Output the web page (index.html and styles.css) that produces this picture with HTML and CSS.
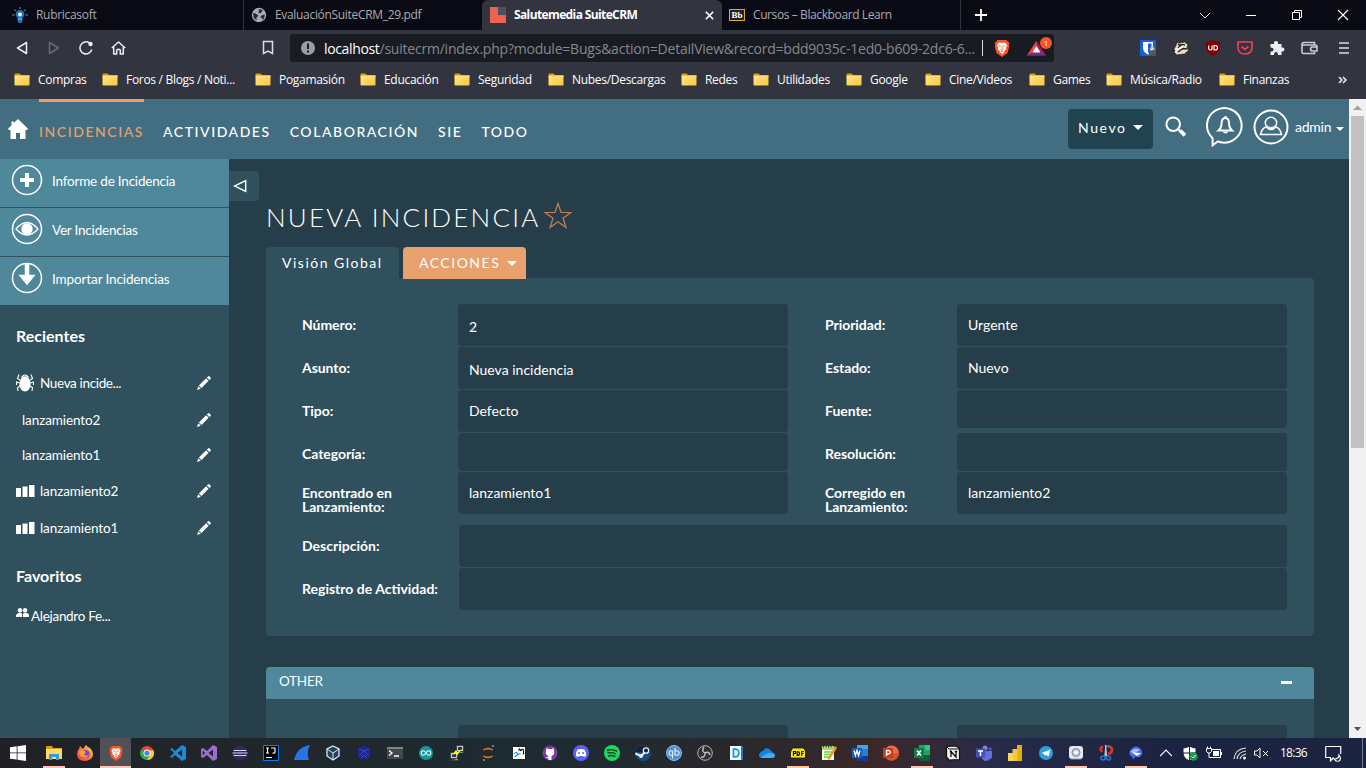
FILE: index.html
```html
<!DOCTYPE html>
<html lang="es">
<head>
<meta charset="utf-8">
<title>Salutemedia SuiteCRM</title>
<link rel="stylesheet" href="styles.css">
</head>
<body>
<svg class="defs" width="0" height="0">
  <defs>
    <linearGradient id="fold" x1="0" y1="0" x2="1" y2="1"><stop offset="0" stop-color="#ffe589"/><stop offset="1" stop-color="#fcc63c"/></linearGradient>
    <linearGradient id="fox" x1="1" y1="0" x2="0" y2="1"><stop offset="0" stop-color="#ffe14a"/><stop offset=".5" stop-color="#ff7a2e"/><stop offset="1" stop-color="#f5316b"/></linearGradient>
    <symbol id="folder" viewBox="0 0 16 13"><path d="M0.5 1.5q0-1 1-1h4l1.5 1.5h8q.7 0 .7.7V4H.5z" fill="#dc9c0c"/><rect x=".5" y="2.6" width="15" height="10" rx=".8" fill="url(#fold)"/></symbol>
    <symbol id="pencil" viewBox="0 0 14 14"><path d="M0 14l1.200-3.800 2.600 2.600zM1.900 9.400l7.200-7.100 2.500 2.500L4.500 12zM9.900 1.500L11.200.3q.6-.5 1.100 0l1.400 1.400q.5.5 0 1.100l-1.300 1.200z" fill="#fff"/></symbol>
    <symbol id="bars" viewBox="0 0 19 12"><path d="M0 3h5v9H0zM6.500 1.500h5V12h-5zM13 0h5.500v12H13z" fill="#fff"/></symbol>
    <symbol id="lion" viewBox="0 0 16 18"><path d="M3.500 1h9L14 3l1.500.5-.7 2.500.5 1.500-1.800 6.500L8 18l-5.500-4L.700 7.500l.5-1.500L.5 3.500 2 3z" fill="#fb542b"/><path d="M5 3.500l3 .6 3-.6 2.200 3-1.400 2.300.4 1.700-2.400 1.500.8 1L8 15l-2.600-2 .8-1-2.400-1.500.4-1.700L2.800 6.500z" fill="#fff"/><path d="M4.500 6.500l2.300.7M11.500 6.500l-2.300.7M8 7v3.500M6.700 10.500L8 11.300l1.300-.8M6.500 13L8 12.200 9.500 13" stroke="#fb542b" stroke-width=".8" fill="none"/></symbol>
  </defs>
</svg>

<header class="tabs">
  <div class="tab tab-one">
    <svg width="16" height="16" viewBox="0 0 16 16"><path d="M8 0v2M2.500 2.500l1.500 1.500M13.500 2.500L12 4M0 8h2.500M13.500 8H16" stroke="#33688e" stroke-width="1.500"/><path d="M8 3a4.300 4.300 0 0 1 2.500 7.800V14l-1.200 2H6.700l-1.200-2v-3.200A4.300 4.300 0 0 1 8 3z" fill="#1c75b5"/><circle cx="8" cy="7.500" r="2" fill="#e9f5ff"/><path d="M6 12h4" stroke="#8bbfe2"/></svg>
    <span>Rubricasoft</span>
  </div>
  <div class="tab tab-two">
    <svg width="16" height="16" viewBox="0 0 16 16"><circle cx="8" cy="8" r="7.200" fill="#a8abb4"/><path d="M2.300 6q2 .2 3.200 1.200l1.500.8v1.300l-1.500 1.200v2.700Q1.800 11.500 2.300 6zM7.500 2.200l3 .2 1.500 1.400-1.500.7-.5 1.800-1.800-.3L7 5l1.300-1zM13.700 7.500L11 8.200 9 10.500l2.500.5-.3 2.200q2.500-1.500 2.500-5.700z" fill="#252831"/></svg>
    <span class="pdf-title">EvaluaciónSuiteCRM_29.pdf</span>
  </div>
  <div class="tab tab-active">
    <svg width="16" height="16" viewBox="0 0 16 16"><path d="M0 0h8v8h8v8H0z" fill="#f0624f"/><path d="M8 0h8v8H8z" fill="#534d60"/></svg>
    <span class="active-title">Salutemedia SuiteCRM</span>
    <svg class="tab-close" width="9" height="9" viewBox="0 0 9 9"><path d="M.8.8l7.400 7.400M8.200.8L.8 8.200" stroke="#fff" stroke-width="1.600"/></svg>
  </div>
  <div class="tab tab-four">
    <span class="bb">Bb</span><span class="bb-title">Cursos – Blackboard Learn</span>
  </div>
  <svg class="plus" width="12" height="12" viewBox="0 0 12 12"><path d="M6 0v12M0 6h12" stroke="#fff" stroke-width="1.800"/></svg>
  <div class="window-buttons">
    <svg width="12" height="12" viewBox="0 0 12 12"><path d="M1 4l5 5 5-5" stroke="#ddd" fill="none"/></svg>
    <svg width="12" height="12" viewBox="0 0 12 12"><path d="M1 6.500h10" stroke="#fff"/></svg>
    <svg width="12" height="12" viewBox="0 0 12 12"><path d="M1.500 3.500h7v7h-7zM3.500 3.500v-2h7v7h-2" stroke="#fff" fill="none"/></svg>
    <svg width="12" height="12" viewBox="0 0 12 12"><path d="M1 1l10 10M11 1L1 11" stroke="#fff" stroke-width="1.100"/></svg>
  </div>
</header>

<div class="toolbar">
  <div class="nav-buttons">
    <svg width="14" height="16" viewBox="0 0 14 16"><path d="M11.500 2.500v11L2.500 8z" fill="none" stroke="#eee" stroke-width="1.500" stroke-linejoin="round"/></svg>
    <svg width="14" height="16" viewBox="0 0 14 16"><path d="M2.500 2.500v11L11.500 8z" fill="none" stroke="#676974" stroke-width="1.500" stroke-linejoin="round"/></svg>
    <svg width="14" height="16" viewBox="0 0 14 16"><path d="M10.500 3A6 6 0 1 0 12.800 9.500" fill="none" stroke="#eee" stroke-width="1.500"/><circle cx="11.500" cy="4" r="2.200" fill="#eee"/></svg>
    <svg width="15" height="16" viewBox="0 0 15 16"><path d="M.8 8L7.500 2l6.700 6M2.700 7v7h3v-4q1.800-1.500 3.600 0v4h3V7" fill="none" stroke="#eee" stroke-width="1.500" stroke-linejoin="round"/></svg>
  </div>
  <svg class="bookmark" width="12" height="16" viewBox="0 0 12 16"><path d="M1.500 1.500h9v12L6 11l-4.500 2.500z" fill="none" stroke="#ddd" stroke-width="1.500"/></svg>
  <div class="address">
    <svg width="14" height="14" viewBox="0 0 14 14"><circle cx="7" cy="7" r="7" fill="#9b9da6"/><path d="M7 2.500v5.500M7 9.500v2" stroke="#191b23" stroke-width="2"/></svg>
    <span class="url"><b>localhost</b>/suitecrm/index.php?module=Bugs&amp;action=DetailView&amp;record=bdd9035c-1ed0-b609-2dc6-6...</span>
    <i class="url-rule"></i>
    <svg class="lion" width="16" height="18"><use href="#lion"/></svg>
    <span class="bat"><svg width="19" height="16" viewBox="0 0 19 16"><path d="M9.500 1L0 15.500h19z" fill="#9e1f63"/><path d="M9.500 1L0 15.500l9.500-6z" fill="#ff4724"/><path d="M0 15.500h19l-9.500-4z" fill="#662d91"/><path d="M9.500 6L5.500 12.500h8z" fill="#fff"/></svg><em>1</em></span>
  </div>
  <div class="extensions">
    <svg width="16" height="16" viewBox="0 0 16 16"><path d="M0 0h16v16H0z" fill="#175ddc"/><path d="M3 2h10v6q0 4-5 6.500Q3 12 3 8z" fill="#fff"/><path d="M8 3.500h3.500V8q0 3-3.500 5z" fill="#175ddc"/><path d="M10.500 10.500V8.500q1.800-2.500 3.500 0v2" fill="none" stroke="#bbb" stroke-width="1.300"/><path d="M9 10.500h7V16H9z" fill="#555"/></svg>
    <svg width="17" height="16" viewBox="0 0 17 16"><path d="M.8 10.500L3.500 6.500 5 2.500l2.500.5 5-1 3.500 2.500-1 3 1.500 3-4 3.500-8 1z" fill="#eadbc9" stroke="#2b2421" stroke-width=".8"/><path d="M6 8l4-3.500 3 .5M6 12l5-3.500 4 .5M6 4.500l3 .5" stroke="#28211f" stroke-width="1.500" fill="none"/><path d="M2.500 10.500l4-1.500 5-3" stroke="#fff" stroke-width="1.500" fill="none"/><circle cx="2" cy="10.500" r="1.200" fill="#28211f"/></svg>
    <svg width="16" height="16" viewBox="0 0 16 16"><path d="M8 0q4 2 7 2v5q0 6-7 9-7-3-7-9V2q3 0 7-2z" fill="#800000"/><path d="M3.700 5.500v3q0 1.500 1.700 1.500T7 8.500v-3M9 10V5.500h1q2.500 0 2.500 2.200T10 10z" stroke="#fff" fill="none" stroke-width="1.200"/></svg>
    <svg width="16" height="16" viewBox="0 0 16 16"><path d="M1 2h14v5q0 7-7 7-7 0-7-7zM4.500 6.500L8 9.500l3.500-3" fill="none" stroke="#ef4056" stroke-width="1.700"/></svg>
    <svg width="16" height="16" viewBox="0 0 16 16"><path d="M1.500 4H5q-.5-3 2-3t2 3h3.500v3.500q3-.5 3 2t-3 2V15H9q0-3-2-3t-2 3H1.500v-3.500q3 0 3-2t-3-2z" fill="#eee"/></svg>
    <svg width="17" height="16" viewBox="0 0 17 16"><path d="M13.500 5V2.500H3q-2 0-2 2V12q0 1.500 1.500 1.500h11V12M1.500 5h12.500q2 0 2 2v4h-5.500q-2-2 0-4H16" fill="none" stroke="#ccc" stroke-width="1.600"/></svg>
    <svg class="burger" width="12" height="16" viewBox="0 0 12 16"><path d="M1 3h10M1 8h10M1 13h10" stroke="#ddd" stroke-width="1.600"/></svg>
  </div>
</div>

<nav class="bookmarks">
  <span><svg><use href="#folder"/></svg>Compras</span>
  <span><svg><use href="#folder"/></svg>Foros / Blogs / Noti...</span>
  <span><svg><use href="#folder"/></svg>Pogamasión</span>
  <span><svg><use href="#folder"/></svg>Educación</span>
  <span><svg><use href="#folder"/></svg>Seguridad</span>
  <span><svg><use href="#folder"/></svg>Nubes/Descargas</span>
  <span><svg><use href="#folder"/></svg>Redes</span>
  <span><svg><use href="#folder"/></svg>Utilidades</span>
  <span><svg><use href="#folder"/></svg>Google</span>
  <span><svg><use href="#folder"/></svg>Cine/Videos</span>
  <span><svg><use href="#folder"/></svg>Games</span>
  <span><svg><use href="#folder"/></svg>Música/Radio</span>
  <span><svg><use href="#folder"/></svg>Finanzas</span>
  <svg class="more" viewBox="0 0 10 8"><path d="M1 1l3 3-3 3M5 1l3 3-3 3" fill="none" stroke="#eee" stroke-width="1.500"/></svg>
</nav>

<div class="page">
  <div class="app">
    <div class="topbar">
      <svg class="home" width="20" height="20" viewBox="0 0 20 20"><path d="M10 0l10 9.800-1 1.200h-1.500v9H12v-6H8v6H2.500v-9H1L0 9.800 3.500 6.300V2.500h2.300V4z" fill="#fff"/></svg>
      <nav class="menu">
        <a class="current">INCIDENCIAS</a><a>ACTIVIDADES</a><a>COLABORACIÓN</a><a>SIE</a><a>TODO</a>
      </nav>
      <button class="new">Nuevo <i class="caret"></i></button>
      <svg class="search" width="22" height="22" viewBox="0 0 22 22"><circle cx="8.200" cy="8.200" r="6.800" fill="none" stroke="#fff" stroke-width="2"/><path d="M13 13l2 2" stroke="#fff" stroke-width="2"/><path d="M15 14.500L20 19.300" stroke="#fff" stroke-width="3.800"/></svg>
      <svg class="bell" width="38" height="42" viewBox="0 0 38 42"><path d="M6.500 32A17.300 17.300 0 1 1 17 36.600q-3-.3-5-1.300l-5.300 4z" fill="none" stroke="#fff" stroke-width="2"/><path d="M12.500 24.500q3-2.500 3-6.500 0-6 3.800-6t3.800 6q0 4 3 6.500z" fill="none" stroke="#fff" stroke-width="2"/><path d="M17 25.500h5q0 2-2.500 2t-2.500-2M18.500 10h2v2h-2z" fill="#fff"/></svg>
      <svg class="user" width="36" height="36" viewBox="0 0 36 36"><circle cx="18" cy="18" r="16.500" fill="none" stroke="#fff" stroke-width="2"/><circle cx="18" cy="14" r="5.700" fill="none" stroke="#fff" stroke-width="1.500"/><path d="M13 18q-4 1-5.500 7.500h21Q27 19 23 18q-5 5-10 0z" fill="none" stroke="#fff" stroke-width="1.500"/><path d="M13 16q5 5 10 0" fill="none" stroke="#fff"/></svg>
      <span class="admin">admin <i class="caret"></i></span>
    </div>
    <div class="body">
      <aside class="sidebar">
        <div class="action"><svg viewBox="0 0 32 32"><circle cx="16" cy="16" r="14.500"/><path d="M16 9v14M9 16h14" stroke-width="4"/></svg>Informe de Incidencia</div>
        <div class="action"><svg viewBox="0 0 32 32"><circle cx="16" cy="16" r="14.500"/><path d="M5 16q11-13 22 0-11 12-22 0z" stroke-width="1.300"/><circle cx="16" cy="16" r="5" class="solid"/></svg>Ver Incidencias</div>
        <div class="action"><svg viewBox="0 0 32 32"><circle cx="16" cy="16" r="14.500"/><path d="M16 1v13" stroke-width="4.500"/><path d="M9 13.500h14L16 22z" class="solid"/></svg>Importar Incidencias</div>
        <h2>Recientes</h2>
        <div class="recent recent-bug"><svg class="bug" width="18" height="18" viewBox="0 0 18 18"><ellipse cx="9" cy="10" rx="5.700" ry="7.500" fill="#fff"/><path d="M5.500 3Q9-1 12.500 3zM4 6L1.500 4.500 3 .5M14 6l2.500-1.500L15 .5M3.500 9L.5 8v3M14.500 9l3-1v3M4 12l-2.500 1.500.5 3.500M14 12l2.500 1.500L16 17" fill="none" stroke="#fff" stroke-width="1.100"/></svg><span>Nueva incide...</span><svg class="pencil"><use href="#pencil"/></svg></div>
        <div class="recent recent-plain"><span>lanzamiento2</span><svg class="pencil"><use href="#pencil"/></svg></div>
        <div class="recent recent-plain"><span>lanzamiento1</span><svg class="pencil"><use href="#pencil"/></svg></div>
        <div class="recent recent-bars"><svg class="bars"><use href="#bars"/></svg><span>lanzamiento2</span><svg class="pencil"><use href="#pencil"/></svg></div>
        <div class="recent recent-bars last"><svg class="bars"><use href="#bars"/></svg><span>lanzamiento1</span><svg class="pencil"><use href="#pencil"/></svg></div>
        <h2 class="favs">Favoritos</h2>
        <div class="favorite"><svg width="13" height="9" viewBox="0 0 13 9"><circle cx="4" cy="2.200" r="2.200" fill="#fff"/><circle cx="9" cy="2.200" r="2.200" fill="#fff"/><path d="M0 9V7q1-2 4-2.500Q6 5 6.200 6.500V9zM7 9V6q0-1 2-1.500Q12.500 5 13 7v2z" fill="#fff"/></svg>Alejandro Fe...</div>
      </aside>
      <div class="toggle"><svg width="14" height="14" viewBox="0 0 14 14"><path d="M12.700 1.500v11L1.500 7z" fill="none" stroke="#fff" stroke-width="1.400"/></svg></div>
      <main>
        <h1>NUEVA INCIDENCIA<svg width="28" height="27" viewBox="0 0 28 27"><path d="M14 1.500l3.100 9H27l-8 5.800 3 9.200-8-5.700-8 5.700 3-9.200-8-5.800h9.900z" fill="none" stroke="#c97f55" stroke-width="1.200"/></svg></h1>
        <div class="panel-tabs"><span class="overview">Visión Global</span><span class="actions">ACCIONES <i class="caret"></i></span></div>
        <section class="panel">
          <div class="columns">
            <div class="fields left">
              <label>Número:</label><div class="value low">2</div>
              <label>Asunto:</label><div class="value low">Nueva incidencia</div>
              <label>Tipo:</label><div class="value">Defecto</div>
              <label>Categoría:</label><div class="value empty"></div>
              <label>Encontrado en Lanzamiento:</label><div class="value">lanzamiento1</div>
            </div>
            <div class="fields right">
              <label>Prioridad:</label><div class="value">Urgente</div>
              <label>Estado:</label><div class="value">Nuevo</div>
              <label>Fuente:</label><div class="value empty"></div>
              <label>Resolución:</label><div class="value empty"></div>
              <label>Corregido en Lanzamiento:</label><div class="value">lanzamiento2</div>
            </div>
          </div>
          <div class="fields wide">
            <label>Descripción:</label><div class="value"></div>
            <label>Registro de Actividad:</label><div class="value"></div>
          </div>
        </section>
        <div class="other-head">OTHER<i></i></div>
        <section class="panel other"><div class="columns"><div class="fields left"><label></label><div class="value"></div></div><div class="fields right"><label></label><div class="value"></div></div></div></section>
      </main>
    </div>
  </div>
  <div class="scrollbar"><svg width="9" height="17" viewBox="0 0 9 17"><path d="M0 11h9L4.500 6.500z" fill="#a3a3a3"/></svg><i></i><svg class="down" width="9" height="17" viewBox="0 0 9 17"><path d="M1 6h7L4.500 10z" fill="#505050"/></svg></div>
</div>

<footer class="taskbar">
  <div class="start"><svg width="16" height="16" viewBox="0 0 16 16"><path d="M0 2.200l6.700-.9v6.200H0zM7.500 1.200L16 0v7.500H7.500zM0 8.300h6.700v6.300L0 13.700zM7.500 8.300H16V16l-8.500-1.200z" fill="#fff"/></svg></div>
  <div class="apps">
    <div class="open"><svg viewBox="0 0 16 16"><path d="M0 2q0-1 1-1h5l1 2h9v4H0z" fill="#dc9c0c"/><path d="M0 4h16v10H0z" fill="#ffd868"/><path d="M3 15V9h10v6h-3v-3H6v3z" fill="#379be0"/></svg></div>
    <div><svg viewBox="0 0 16 16"><path d="M2 4l1-3 3 3 3-4q2 3 4 3 3 3 3 6 0 6-8 7Q0 16 0 9q0-3 2-5z" fill="url(#fox)"/><circle cx="8.500" cy="9" r="4" fill="#7646d8"/><path d="M2 6l4-1 3 2-2 2q1 3 5 1-2 4-7 2-3-2-3-6z" fill="#ff9a2e"/></svg></div>
    <div class="focused"><svg><use href="#lion"/></svg></div>
    <div><svg class="small" viewBox="0 0 16 16"><path d="M8 8L1.100 4A8 8 0 0 1 14.900 4z" fill="#ea4335"/><path d="M8 8l6.900-4A8 8 0 0 1 8 16l3.500-6z" fill="#fcc934"/><path d="M8 8h6.900V4H8z" fill="#ea4335"/><path d="M8 5h7.400a8 8 0 0 1-7.400 11l3.500-6z" fill="#fcc934"/><path d="M8 8L1.100 4A8 8 0 0 0 8 16l3.500-6z" fill="#34a853"/><circle cx="8" cy="8" r="4" fill="#fff"/><circle cx="8" cy="8" r="3" fill="#4285f4"/></svg></div>
    <div><svg viewBox="0 0 16 16"><path d="M12 0l4 2v12l-4 2-7-6-3 3-2-1 4-4-4-4 2-1 3 3zM12 4.500L7.500 8l4.500 3.500z" fill="#1f8ad2"/></svg></div>
    <div><svg viewBox="0 0 16 16"><path d="M12 0l4 2v12l-4 2-6-6-4 3-2-1V4l2-1 4 3zM12 4.500L7.500 8l4.500 3.500zM1.700 5.500v5L4 8z" fill="#9b6fd0" fill-rule="evenodd"/></svg></div>
    <div><svg viewBox="0 0 16 16"><circle cx="8" cy="8" r="7.200" fill="#342961"/><path d="M1.500 5.500h13M.5 8h15M1.500 10.500h13" stroke="#d6d2e6" stroke-width="1.200"/></svg></div>
    <div><svg viewBox="0 0 16 16"><path d="M.5.5h15v15H.5z" fill="#000" stroke="#087cfa"/><path d="M3 3h3M4.500 3v5M3 8h3M8 3h4v4q0 1.500-2.500 1M3 12.500h6" fill="none" stroke="#fff" stroke-width="1.200"/></svg></div>
    <div><svg viewBox="0 0 16 16"><path d="M0 15Q3 2 16 0q-4 7-1 15z" fill="#2675e8"/></svg></div>
    <div><svg viewBox="0 0 16 16"><path d="M8 1l6 3v7l-6 4-6-4V4z" fill="#22415f" stroke="#dce7f1" stroke-width="1.300"/><path d="M2 4l6 4 6-4M8 8v7" stroke="#dce7f1" fill="none"/></svg></div>
    <div><svg viewBox="0 0 16 16"><path d="M8 .5l5.500 2.500 1.500 6-4.500 5.500-6-.5L1 9l1.500-6z" fill="#1b2790"/><path d="M3 4l5 2 5-2M3 11l5-5 5 5M5 13l3-3 3 3" fill="none" stroke="#4656c9" stroke-width=".8"/></svg></div>
    <div><svg viewBox="0 0 16 16"><path d="M0 2h16v12H0z" fill="#45484b"/><path d="M0 2h16v2H0z" fill="#808284"/><path d="M2 5.500L5 8l-3 2.500M7 11h5" fill="none" stroke="#fff" stroke-width="1.300"/></svg></div>
    <div><svg class="small" viewBox="0 0 16 16"><circle cx="8" cy="8" r="8" fill="#14999d"/><path d="M8 8Q6.500 5.500 5 5.500A2.500 2.500 0 0 0 5 10.500Q6.500 10.500 8 8 9.500 5.500 11 5.500A2.500 2.500 0 0 1 11 10.500Q9.500 10.500 8 8z" fill="none" stroke="#e9ffff" stroke-width="1.200"/></svg></div>
    <div><svg viewBox="0 0 16 16"><path d="M7.500.5h7v6h-7zM1.500 7.500h7v6h-7zM9 8h5.500l-1-1.500M.5 15.500h9l-1-2z" fill="#ccc" stroke="#333" stroke-width=".8"/><path d="M9 2h4v3H9zM3 9h4v3H3z" fill="#236"/><path d="M3 10l4-5 1.500 2L13 4 8 10.500 7 8.500z" fill="#ff0"/></svg></div>
    <div><svg viewBox="0 0 16 16"><path d="M3 5q5-4 10 0-5-2-10 0M3 11q5 4 10 0-5 2-10 0" fill="#f37726" stroke="#f37726" stroke-width=".7"/><circle cx="13" cy="1" r="1" fill="#999"/><circle cx="4" cy="15" r="1" fill="#999"/></svg></div>
    <div><svg class="tile" viewBox="0 0 12 12"><path d="M0 0h12v12H0z" fill="#fff"/><path d="M5.500 3.500l1-1.500 1 1.500Q10.500 1 10.500 4v3.500" fill="none" stroke="#111" stroke-width="1.200"/><path d="M1 6.500l2.500-1L5 7.500 1.500 10M5 7.500l2.500-1" fill="none" stroke="#208cf0" stroke-width="1.200"/></svg></div>
    <div><svg viewBox="0 0 16 16"><circle cx="8" cy="8" r="7.500" fill="#7c3ba4"/><path d="M4.500 3l2 1h3l2-1 .5 3q1 4-2.500 5v4h-3v-2q-2 1-3-1 2 1 3-1Q3 10 4 6z" fill="#fff"/></svg></div>
    <div><svg viewBox="0 0 16 16"><circle cx="8" cy="8" r="8" fill="#5865f2"/><path d="M4.500 4.500L7 4h2l2.500.5q2 3 1.500 6.500L11 12l-1-1H6l-1 1-2-1q-.5-3.500 1.500-6.500z" fill="#fff"/><path d="M6 7v2M10 7v2" stroke="#5865f2" stroke-width="1.500"/></svg></div>
    <div><svg viewBox="0 0 16 16"><circle cx="8" cy="8" r="8" fill="#1ed760"/><path d="M3 5.500q5-2 10 .8M3.500 8.200q5-1.500 8.500.8M4 11q4-1.300 7.300.6" fill="none" stroke="#173020" stroke-width="1.400"/></svg></div>
    <div><svg viewBox="0 0 16 16"><circle cx="8" cy="8" r="8" fill="#164a85"/><path d="M.2 7A8 8 0 0 1 15.800 7z" fill="#142037"/><path d="M.3 8.500l6 2.500L11 6" stroke="#eee" stroke-width="2.200" fill="none"/><circle cx="11" cy="5.500" r="2.700" fill="#123" stroke="#eee" stroke-width="1.300"/><circle cx="6" cy="11" r="2" fill="#eee"/></svg></div>
    <div><svg viewBox="0 0 16 16"><circle cx="8" cy="8" r="7.500" fill="#4e8ed0" stroke="#91bde8"/><path d="M6.500 5.500v8M6.500 6q-3.500-1-3.500 2t3.500 2M9 3v7q4 1 4-2t-4-2" fill="none" stroke="#e1f0ff" stroke-width="1.200"/></svg></div>
    <div><svg viewBox="0 0 16 16"><circle cx="8" cy="8" r="7.300" fill="#302e31" stroke="#b5b2b2"/><path d="M8 8Q4 6 7 2M8 8q4-2 5 2M8 8q0 5-4 4" fill="none" stroke="#bbb" stroke-width="1.500"/></svg></div>
    <div><svg class="small" viewBox="0 0 14 14"><path d="M1 0h12v14H1z" fill="#f2f8ff"/><path d="M12 0h2v14h-2z" fill="#2778bd"/><path d="M4.500 3.200v7.600h1.500q3.800 0 3.800-3.800T6 3.200z" fill="none" stroke="#169edb" stroke-width="1.800"/></svg></div>
    <div><svg viewBox="0 0 16 16"><path d="M1 8q1-2 3-2 2-4 6-2 2 1 3 3 3 1 3 3 0 3-3 3H3q-3 0-3-3 0-1 1-2z" fill="#1683dc"/><path d="M2 12l7-4q7 0 7 3-1 2-3 2H3z" fill="#42adf2"/></svg></div>
    <div class="open"><svg viewBox="0 0 16 16"><path d="M2.500 3h11L15.500 6v7H.5V7z" fill="#f5e816" stroke="#111" stroke-width=".8"/><path d="M3.500 11V6.500h2v2h-2M7.200 6.500v4q2.300 0 2.300-2T7.200 6.500M11.700 11V6.500h2M11.700 8.500h1.800" fill="none" stroke="#111" stroke-width="1.200"/></svg></div>
    <div><svg viewBox="0 0 16 16"><path d="M1 1h12v14H1z" fill="#efffe5"/><path d="M3 7h8M3 9.500h7M3 12h5" stroke="#7acb49" stroke-width="1.300"/><path d="M1 1h12v4H1z" fill="#a7db69"/><path d="M14 1l2 2-7 11-2 1V13z" fill="#ee9b2c"/><path d="M2.500 0v2.500M5 0v2.500M7.500 0v2.500M10 0v2.500" stroke="#333"/></svg></div>
    <div><svg viewBox="0 0 16 16"><path d="M5 0h11v16H5z" fill="#2b7cd3"/><path d="M5 0h11v4H5z" fill="#41a5ee"/><path d="M5 11h11v5H5z" fill="#103f91"/><path d="M0 3h10v10H0z" fill="#185abd"/><path d="M2 5.500l1.400 5 1.600-5 1.600 5 1.400-5" fill="none" stroke="#fff" stroke-width="1.300"/></svg></div>
    <div><svg viewBox="0 0 16 16"><circle cx="8.500" cy="8" r="7.500" fill="#ed6c47"/><path d="M8.500 8H16a7.500 7.500 0 0 1-13 5z" fill="#d35230"/><path d="M0 3h10v10H0z" fill="#c43e1c"/><path d="M3.500 11V5.500h1.800q2 .2 2 1.800T5.300 9H3.500" fill="none" stroke="#fff" stroke-width="1.300"/></svg></div>
    <div class="open"><svg viewBox="0 0 16 16"><path d="M5 0h11v16H5z" fill="#21a366"/><path d="M11 0h5v5h-5z" fill="#33c481"/><path d="M5 10h11v6H5z" fill="#185c37"/><path d="M0 3h10v10H0z" fill="#107c41"/><path d="M3 5.500l4 5M7 5.500l-4 5" stroke="#fff" stroke-width="1.500"/></svg></div>
    <div><svg viewBox="0 0 16 16"><path d="M1.500 1.500L11 1l3.500 2.500v11L4 15l-2.500-3z" fill="#eee" stroke="#111" stroke-width="1.200"/><path d="M6 12V6.500l5 5.500V6.500M4.800 6.500H7M9.800 6.500h2.400" fill="none" stroke="#111" stroke-width="1.300"/><path d="M2 2l2 2h10" fill="none" stroke="#111"/></svg></div>
    <div><svg viewBox="0 0 16 16"><circle cx="9" cy="3" r="2.500" fill="#7b83eb"/><circle cx="14" cy="4" r="1.700" fill="#5059c9"/><path d="M6 6h10v5q0 3-2 3-2 2-5 2-3-1-3-4z" fill="#6470d6"/><path d="M0 3.500h9v9H0z" fill="#464eb8"/><path d="M2 6h5M4.500 6v5" stroke="#fff" stroke-width="1.400"/></svg></div>
    <div><svg viewBox="0 0 16 16"><path d="M10 0h5v16h-5z" fill="#e6ad10"/><path d="M5.500 4h5v12h-5z" fill="#f2c83b"/><path d="M1 8h5v8H1z" fill="#f6d65c"/></svg></div>
    <div><svg class="small" viewBox="0 0 16 16"><circle cx="8" cy="8" r="8" fill="#2aa1da"/><path d="M3 8l10-4-2 8-3-2-1.500 1.500L6 9z" fill="#fff"/></svg></div>
    <div class="open"><svg viewBox="0 0 16 16"><rect x="1" y="1" width="14" height="13" rx="3" fill="#e5e9f1"/><circle cx="8" cy="7.500" r="4" fill="#c5ccda" stroke="#7b879d"/><circle cx="8" cy="7.500" r="1.800" fill="#fff"/><path d="M3 14h10" stroke="#8f9ab0"/></svg></div>
    <div><svg viewBox="0 0 16 16"><path d="M4 7Q1 3 5 1.500M9 1.500q5-.5 5 3.500 0 3-4 4" fill="none" stroke="#d73722" stroke-width="2.800"/><path d="M7.500 0l1 11M8 0L7 11" stroke="#b8ccdf" stroke-width="1.300"/><circle cx="5" cy="13" r="2" fill="none" stroke="#267ac5" stroke-width="1.600"/><circle cx="10.500" cy="13" r="2" fill="none" stroke="#267ac5" stroke-width="1.600"/></svg></div>
    <div class="open"><svg viewBox="0 0 16 16"><path d="M1.500 6.500Q5 1 9 1.500L13 4l1.500 4.500L12 12H7l-2 2.500-1-3L1.500 10z" fill="#4a6cf0"/><path d="M2 7q4-5 10-2.500l-5 4z" fill="#a8bcff"/><path d="M4 7.500l9 .5-4 3z" fill="#fff"/></svg></div>
  </div>
  <div class="tray">
    <svg width="12" height="16" viewBox="0 0 12 16"><path d="M0 11l6-6 6 6" fill="none" stroke="#fff" stroke-width="1.200"/></svg>
    <svg width="16" height="17" viewBox="0 0 16 17"><path d="M7.500 1q3 2 6.500 2v5q0 5-6.500 8Q1 13 1 8V3q3.500 0 6.500-2zM7.500 1v15M1 8h13" fill="#fff" stroke="#1a2132"/><circle cx="11.500" cy="11.500" r="4.300" fill="#169b4c"/><path d="M9.500 11.500l1.500 1.500 2.500-3" stroke="#fff" fill="none"/></svg>
    <svg width="17" height="16" viewBox="0 0 17 16"><path d="M5.500 4.500h9v8h-9M15.500 7v3" fill="none" stroke="#fff"/><path d="M7 6h6v5H7z" fill="#fff"/><path d="M1.500 1.500v2M4.500 1.500v2M.5 3.500h5v3L4 8H2L.5 6.500zM3 8v4.500h3" fill="none" stroke="#fff"/></svg>
    <svg width="14" height="16" viewBox="0 0 14 16"><path d="M1 14Q2 4 13 3M4 14q1-7 9-8M7 14q1-4 6-5" fill="none" stroke="#ddd" stroke-width="1.200"/><circle cx="11.500" cy="13" r="1.500" fill="#fff"/></svg>
    <svg width="15" height="16" viewBox="0 0 15 16"><path d="M.5 6h2.500l3-3v10l-3-3H.5zM9 6l5 5M14 6l-5 5" fill="none" stroke="#fff"/></svg>
    <time>18:36</time>
    <svg class="notice" width="17" height="17" viewBox="0 0 17 17"><path d="M.7 1.500h15V9M.7 1.500v11h4.800V16l3-3.500M9 14q5 0 5-4 3 4 0 6-3 1-5-2z" fill="none" stroke="#fff" stroke-width="1.200"/></svg>
    <i></i>
  </div>
</footer>
</body>
</html>
```

FILE: styles.css
```css
* { box-sizing: border-box; }
body { margin: 0; width: 1366px; height: 768px; overflow: hidden; display: flex; flex-direction: column; background: #0b0b14; font: 14px Lato, sans-serif; color: #fff; }
svg { display: block; flex: none; }
i, em { font-style: normal; }
.defs { position: absolute; }
.tabs, .toolbar, .bookmarks, .taskbar { font-family: "Open Sans", sans-serif; flex: none; }

.tabs { height: 30px; display: flex; align-items: center; font-size: 12px; letter-spacing: -.3px; color: #aaabb1; background: #0a0a14; }
.tab { height: 30px; display: flex; align-items: center; flex: none; white-space: nowrap; }
.tab span { margin-top: -1px; }
.tab-one { width: 243px; padding-left: 12px; gap: 8px; }
.tab-two { width: 239px; padding-left: 7px; gap: 8px; border-left: 1px solid #34343d; }
.pdf-title { letter-spacing: -.32px; }
.tab-active { width: 240px; padding-left: 8px; gap: 8px; background: #323440; color: #fff; border-radius: 6px 6px 0 0; }
.active-title { font-weight: 700; letter-spacing: -.62px; width: 184px; }
.tab-close { margin-left: -1px; }
.tab-four { width: 239px; padding-left: 7px; gap: 8px; border-right: 1px solid #34343d; }
.bb-title { letter-spacing: -.4px; }
.tab .bb { width: 16px; height: 12px; margin: 0; border: 1px solid #e0a634; background: #222; color: #fff; font: 700 9px/10px "Liberation Serif", serif; text-align: center; letter-spacing: 0; }
.plus { margin-left: 14px; }
.window-buttons { display: flex; gap: 34px; margin-left: auto; margin-right: 17px; }

.toolbar { height: 36px; display: flex; align-items: center; background: #323440; }
.nav-buttons { display: flex; gap: 18px; padding-left: 15px; width: 262px; }
.bookmark { width: 12px; }
.address { margin-left: 16px; width: 764px; height: 28px; display: flex; align-items: center; background: #191b23; border-radius: 3px; padding-left: 11px; }
.url { margin-left: 9px; width: 658px; font-size: 14px; letter-spacing: -.22px; color: #86888f; white-space: nowrap; }
.url b { font-weight: 400; color: #fff; letter-spacing: -.35px; }
.url-rule { width: 1px; height: 16px; background: #ddd; margin-right: 11px; }
.bat { position: relative; margin-left: 17px; }
.bat em { position: absolute; left: 13px; top: -3px; width: 12px; height: 12px; border-radius: 6px; background: #fb542b; font-size: 8px; line-height: 12px; text-align: center; }
.extensions { display: flex; align-items: center; gap: 16px; margin-left: auto; margin-right: 16px; }
.burger { margin-left: 4px; }

.bookmarks { height: 33px; padding: 0 0 5px 14px; display: grid; grid-template-columns: 88px 153px 105px 94px 94px 133px 72px 93px 79px 104px 77px 113px 119px 10px; align-items: center; background: #323440; font-size: 12px; line-height: 16px; letter-spacing: -.3px; white-space: nowrap; }
.bookmarks span { display: flex; align-items: center; gap: 8px; margin-top: -1px; }
.bookmarks span svg { width: 16px; height: 13px; }
.more { width: 10px; height: 8px; }

.page { height: 639px; flex: none; display: flex; }
.app { width: 1349px; height: 639px; display: flex; flex-direction: column; overflow: hidden; }
.topbar { height: 60px; flex: none; background: #436e81; display: flex; align-items: center; padding-left: 8px; }
.menu { display: flex; align-self: stretch; gap: 19px; margin-left: 11px; width: 1029px; }
.menu a { border-top: 3px solid transparent; padding-top: 21px; line-height: 18px; letter-spacing: 1.550px; font-weight: 500; }
.menu .current { color: #e8a06d; border-color: #e8a06d; }
.new { width: 85px; height: 40px; border: 0; border-radius: 4px; background: #21434f; color: #fff; font: 14px Lato, sans-serif; letter-spacing: 1.600px; padding: 0 0 3px 10px; display: flex; align-items: center; gap: 6px; }
.caret { width: 0; height: 0; border: 5.500px solid transparent; border-top-color: #fff; border-bottom: 0; }
.search { margin: 0 0 4px 12px; }
.bell { margin: -5px 0 0 19px; }
.user { margin: -4px 0 0 9px; }
.admin { display: flex; align-items: center; gap: 5px; margin: -6px 0 0 6px; letter-spacing: -.25px; }
.admin .caret { border-width: 4.500px; border-bottom-width: 0; margin-top: 6px; }

.body { flex: 1; display: flex; align-items: flex-start; background: #263e49; }
.sidebar { width: 229px; height: 579px; background: #2f505c; flex: none; }
.action { height: 49px; border-bottom: 1px solid #2f505c; background: #4f879b; display: flex; align-items: center; padding: 0 0 4px 11px; gap: 9px; font-size: 13.500px; letter-spacing: -.2px; }
.action:nth-child(3) { height: 48px; border: 0; letter-spacing: -.12px; }
.action svg { width: 32px; height: 32px; fill: none; stroke: #fff; stroke-width: 1.500; margin-top: -3px; }
.solid { fill: #fff; }
h2 { font-size: 16px; line-height: 20px; font-weight: 700; margin: 21px 0 18px 16px; }
.recent { display: flex; align-items: center; height: 36px; padding: 0 18px 0 16px; font-size: 13.500px; letter-spacing: -.1px; }
.recent span { flex: 1; }
.recent-bug { height: 38px; letter-spacing: -.35px; }
.recent-plain { padding-left: 22px; height: 35.500px; }
.last { height: 37px; }
.pencil { width: 14px; height: 14px; }
.bug { margin-right: 6px; }
.bars { width: 19px; height: 12px; margin-right: 5px; }
.favs { margin: 20px 0 20px 16px; }
.favorite { display: flex; height: 20px; padding-left: 16px; gap: 2px; font-size: 13.500px; line-height: 20px; letter-spacing: -.3px; }
.favorite svg { margin-top: 2px; }
.toggle { width: 30px; height: 30px; margin-top: 12px; background: #2f505c; border-radius: 0 4px 4px 0; padding: 8px 4px; }

main { width: 1048px; margin-left: 7px; padding-top: 40px; }
h1 { margin: 0; height: 48px; font-size: 26px; line-height: 36px; font-weight: 300; letter-spacing: 2.200px; display: flex; }
h1 svg { margin: 3px 0 0 4px; }
.panel-tabs { height: 31px; display: flex; gap: 4px; }
.overview, .actions { height: 31px; letter-spacing: 1.500px; line-height: 32px; border-radius: 4px 4px 0 0; }
.overview { width: 133px; padding-left: 16px; background: #2f505c; }
.actions { width: 123px; height: 32px; padding-left: 16px; background: #e8a06d; display: flex; align-items: center; gap: 7px; z-index: 1; }
.panel { height: 358px; background: #2f505c; border-radius: 0 4px 4px 4px; padding: 26px 27px 0 36px; }
.columns { display: flex; gap: 37px; }
.fields { display: grid; align-items: start; }
.left { grid-template: 43px 43px 43px 39px 42px / 156px 330px; }
.right { grid-template: 43px 43px 43px 39px 42px / 132px 330px; }
.wide { grid-template: 43px 42px / 157px 828px; margin-top: 11px; }
label { font-weight: 700; font-size: 14px; line-height: 14px; padding-top: 14px; white-space: nowrap; }
.left label, .right label { width: 115px; white-space: normal; letter-spacing: -.05px; }
.value { height: 42px; border-radius: 4px; background: #263e49; padding: 13px 0 0 11px; line-height: 16px; }
.value.low { padding-top: 15px; }
.value.empty { height: 38px; }
.other-head { height: 32px; margin-top: 31px; background: #4f879b; border-radius: 4px 4px 0 0; padding: 0 22px 4px 13px; display: flex; align-items: center; justify-content: space-between; font-size: 13.500px; letter-spacing: -.25px; }
.other-head i { width: 11px; height: 3px; background: #fff; margin-top: 2px; }
.other { border-radius: 0; height: 60px; }

.scrollbar { width: 17px; height: 639px; background: #f1f1f1; display: flex; flex-direction: column; align-items: center; }
.scrollbar i { width: 13px; height: 332px; background: #c1c1c1; }
.scrollbar .down { margin-top: auto; }

.taskbar { height: 30px; display: flex; background: linear-gradient(90deg, #1f2126, #20272c 250px, #1d2b31 550px, #29282c 740px, #3b2829 880px, #282a49 990px, #1a2341 1180px, #1b2440); }
.start { width: 38px; padding: 7px 0 0 10px; }
.apps { width: 1114px; display: grid; grid-template-columns: repeat(33, 31px) repeat(3, 30px); height: 30px; }
.apps div { display: flex; align-items: center; justify-content: center; }
.apps svg { width: 16px; height: 16px; }
.apps svg.small { width: 14px; height: 14px; }
.apps svg.tile { width: 12px; height: 12px; }
.apps .open { background: linear-gradient(#ffc5ae, #ffc5ae) center bottom / 22px 2px no-repeat; }
.apps .focused { background: #505156; border-bottom: 2px solid #ffc5ae; padding-top: 2px; }
.tray { display: flex; align-items: center; flex: 1; padding-left: 8px; }
.tray svg:nth-child(2) { margin-left: 10px; }
.tray svg:nth-child(3) { margin-left: 8px; }
.tray svg:nth-child(4) { margin-left: 10px; }
.tray svg:nth-child(5) { margin-left: 7px; }
time { margin: -2px 0 0 11px; width: 28px; font-size: 12px; letter-spacing: -.75px; white-space: nowrap; }
.tray .notice { margin-left: 17px; }
.tray i { width: 1px; height: 30px; background: #777c8a; margin-left: 20px; }
```
